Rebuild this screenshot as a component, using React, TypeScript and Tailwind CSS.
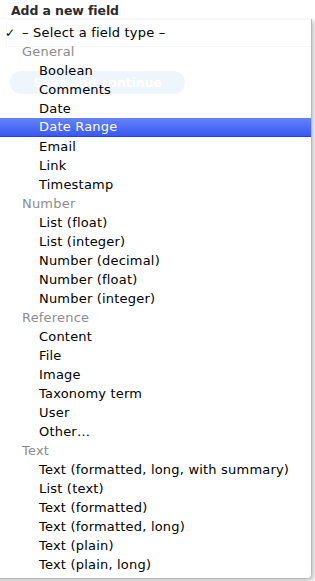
type Row = { label: string; kind: 'selected' | 'group' | 'item' | 'active' }

const rows: Row[] = [
  { label: '– Select a field type –', kind: 'selected' },
  { label: 'General', kind: 'group' },
  { label: 'Boolean', kind: 'item' },
  { label: 'Comments', kind: 'item' },
  { label: 'Date', kind: 'item' },
  { label: 'Date Range', kind: 'active' },
  { label: 'Email', kind: 'item' },
  { label: 'Link', kind: 'item' },
  { label: 'Timestamp', kind: 'item' },
  { label: 'Number', kind: 'group' },
  { label: 'List (float)', kind: 'item' },
  { label: 'List (integer)', kind: 'item' },
  { label: 'Number (decimal)', kind: 'item' },
  { label: 'Number (float)', kind: 'item' },
  { label: 'Number (integer)', kind: 'item' },
  { label: 'Reference', kind: 'group' },
  { label: 'Content', kind: 'item' },
  { label: 'File', kind: 'item' },
  { label: 'Image', kind: 'item' },
  { label: 'Taxonomy term', kind: 'item' },
  { label: 'User', kind: 'item' },
  { label: 'Other…', kind: 'item' },
  { label: 'Text', kind: 'group' },
  { label: 'Text (formatted, long, with summary)', kind: 'item' },
  { label: 'List (text)', kind: 'item' },
  { label: 'Text (formatted)', kind: 'item' },
  { label: 'Text (formatted, long)', kind: 'item' },
  { label: 'Text (plain)', kind: 'item' },
  { label: 'Text (plain, long)', kind: 'item' },
]

function MenuRow({ row }: { row: Row }) {
  if (row.kind === 'selected') {
    return (
      <div className="h-[19px] flex items-center text-black">
        <span className="w-[28px] pl-[11px] text-[12px] font-bold leading-none">✓</span>
        <span>{row.label}</span>
      </div>
    )
  }
  if (row.kind === 'group') {
    return (
      <div className="h-[19px] flex items-center pl-[28px] text-[#8c8c8c]">
        {row.label}
      </div>
    )
  }
  if (row.kind === 'active') {
    return (
      <div className="h-[19px] flex items-center pl-[45px] text-white bg-gradient-to-b from-[#6583f7] to-[#3a58f3] border-b border-[#2b3bf0]">
        {row.label}
      </div>
    )
  }
  return (
    <div className="h-[19px] flex items-center pl-[45px] text-black">
      {row.label}
    </div>
  )
}

export default function App() {
  return (
    <div className="relative w-[315px] h-[581px] bg-white overflow-hidden font-['DejaVu_Sans',sans-serif] text-[13px] tracking-[0.2px]">
      {/* Page behind the popup */}
      <div className="pt-[3px] pl-[11px] font-bold text-[12.5px] text-[#2b2b2b] leading-[16px] tracking-[-0.1px]">Add a new field</div>
      <div className="ml-[6px] mr-[3px] h-[28px] rounded-t-[4px] border border-[#8fb2d6] bg-white" />
      <div className="ml-[10px] mt-[24px] w-[175px] h-[23px] rounded-full bg-[#5a9ee6] flex items-center justify-center text-white font-bold text-[12px]">
        Save and continue
      </div>

      {/* Popup menu */}
      <div className="absolute left-[-6px] top-[19px] w-[318px] pt-[4px] pb-[4px] rounded-b-[5px] border-r border-b border-[#b9b9b9] bg-white/[0.9] shadow-[2px_2px_4px_rgba(0,0,0,0.25)]">
        {rows.map((row) => (
          <MenuRow key={row.label} row={row} />
        ))}
      </div>
    </div>
  )
}
